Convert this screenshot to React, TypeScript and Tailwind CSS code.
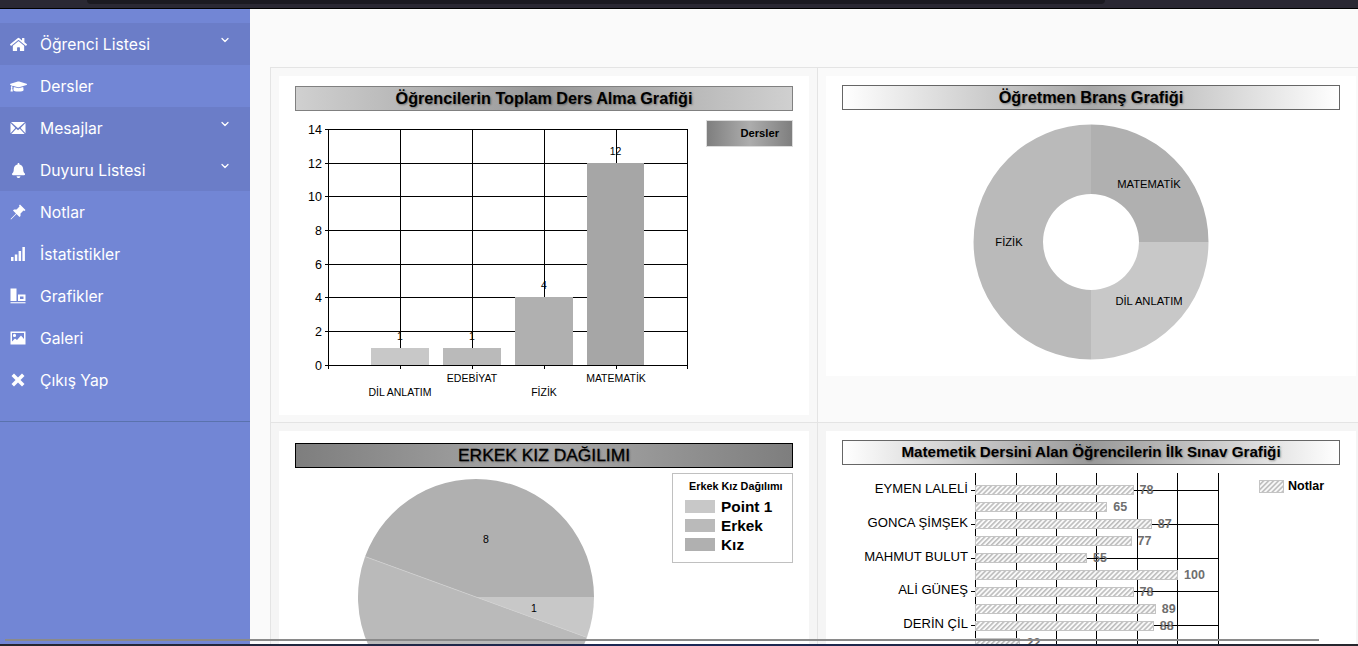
import { Fragment, type ReactNode } from "react";
import { ChevronDown } from "lucide-react";
import { FaBell, FaGraduationCap, FaHome } from "react-icons/fa";

// Sidebar glyphs that the icon packs don't carry in this shape
function EnvelopeIcon() {
  return (
    <svg width="16" height="16" viewBox="0 0 16 16" fill="currentColor">
      <path d="M1 2h14L8 8.200Z" />
      <path d="M0.500 3v10.200L5.400 8Z" />
      <path d="M15.500 3v10.200L10.600 8Z" />
      <path d="M1.300 14 6.200 8.800 8 10.300l1.800-1.500L14.700 14Z" />
    </svg>
  );
}

function PinIcon() {
  return (
    <svg width="16" height="16" viewBox="0 0 16 16" fill="currentColor">
      <path d="M10 0.500 15.500 6l-1 1-1-.5-3 3V12l-1 1-3-3L1 15.500 0.500 15 6 9.500l-3-3 1-1h2.500l3-3-.5-1Z" />
    </svg>
  );
}

function SignalIcon() {
  return (
    <svg width="16" height="16" viewBox="0 0 16 16" fill="currentColor">
      <rect x="1" y="11" width="2.500" height="4" />
      <rect x="4.800" y="8.500" width="2.500" height="6.500" />
      <rect x="8.600" y="5" width="2.500" height="10" />
      <rect x="12.400" y="1" width="2.500" height="14" />
    </svg>
  );
}

function AlignBottomIcon() {
  return (
    <svg width="16" height="16" viewBox="0 0 16 16" fill="currentColor">
      <rect x="0.500" y="0.500" width="6" height="12.500" />
      <path fillRule="evenodd" d="M8 6.500h7.500V13H8Zm2 2v2.500h3.500V8.500Z" />
      <rect x="0.500" y="14.200" width="15" height="1.100" />
    </svg>
  );
}

function PictureIcon() {
  return (
    <svg width="16" height="16" viewBox="0 0 16 16" fill="currentColor">
      <path
        fillRule="evenodd"
        d="M0.500 1.500h15v13h-15Zm1.500 1.500v8.500l3-3 2 1.500 4-4.500 3 3.500V3ZM4.500 3.800a1.600 1.600 0 1 1 0 3.200 1.600 1.600 0 0 1 0-3.200Z"
      />
    </svg>
  );
}

function RemoveIcon() {
  return (
    <svg width="16" height="16" viewBox="0 0 16 16" fill="currentColor">
      <path d="M4 1.500 8 5.500l4-4 2.500 2.500-4 4 4 4-2.500 2.500-4-4-4 4L1.500 12l4-4-4-4Z" />
    </svg>
  );
}

const menu: { label: string; icon: ReactNode; dark?: boolean; arrow?: boolean }[] = [
  { label: "Öğrenci Listesi", icon: <FaHome size={17} />, dark: true, arrow: true },
  { label: "Dersler", icon: <FaGraduationCap size={17} /> },
  { label: "Mesajlar", icon: <EnvelopeIcon />, dark: true, arrow: true },
  { label: "Duyuru Listesi", icon: <FaBell size={15} />, dark: true, arrow: true },
  { label: "Notlar", icon: <PinIcon /> },
  { label: "İstatistikler", icon: <SignalIcon /> },
  { label: "Grafikler", icon: <AlignBottomIcon /> },
  { label: "Galeri", icon: <PictureIcon /> },
  { label: "Çıkış Yap", icon: <RemoveIcon /> },
];

function Sidebar() {
  return (
    <aside className="w-[250px] shrink-0 bg-[#7286d5] pt-[14px] text-white font-['Inter',sans-serif]">
      <ul className="border-b border-[#5a72ad] pb-5">
        {menu.map((item) => (
          <li
            key={item.label}
            className={`flex h-[42px] items-center ${item.dark ? "bg-[#6b7dc8]" : ""}`}
          >
            <span className="flex w-[40px] justify-center pr-[4px]">{item.icon}</span>
            <span className="flex-1 pt-[2px] text-[15.7px] leading-none">{item.label}</span>
            {item.arrow && <ChevronDown className="mr-[19px] mb-[8px] h-3 w-3" strokeWidth={2.5} />}
          </li>
        ))}
      </ul>
    </aside>
  );
}

function ChartTitle({ children, className }: { children: ReactNode; className: string }) {
  return (
    <div
      className={`mx-4 flex h-[25px] items-center justify-center border bg-linear-to-r font-bold text-black [text-shadow:1px_1px_2px_rgba(0,0,0,0.35)] ${className}`}
    >
      {children}
    </div>
  );
}

const GRID = "#000";

function BarChart() {
  const yPos: Record<number, number> = { 14: 129, 12: 163, 10: 196, 8: 230, 6: 264, 4: 297, 2: 331, 1: 348, 0: 365 };
  const ys = [14, 12, 10, 8, 6, 4, 2, 0];
  const xs = [328, 400, 472, 544, 616, 687];
  const bars = [
    { x: 371, w: 58, v: 1, fill: "#c8c8c8" },
    { x: 443, w: 58, v: 1, fill: "#bababa" },
    { x: 515, w: 58, v: 4, fill: "#b0b0b0" },
    { x: 587, w: 57, v: 12, fill: "#a6a6a6" },
  ];
  const cats = [
    { t: "DİL ANLATIM", x: 400, y: 396 },
    { t: "EDEBİYAT", x: 472, y: 382 },
    { t: "FİZİK", x: 544, y: 396 },
    { t: "MATEMATİK", x: 616, y: 382 },
  ];
  return (
    <svg width="530" height="304" viewBox="279 111 530 304" className="block">
      <defs>
        <linearGradient id="legendBg" x1="0" x2="1" y1="0" y2="0">
          <stop offset="0" stopColor="#7e7e7e" />
          <stop offset="0.5" stopColor="#adadad" />
          <stop offset="1" stopColor="#7e7e7e" />
        </linearGradient>
      </defs>
      {ys.map((v) => (
        <Fragment key={v}>
          <line x1="325" x2="688" y1={yPos[v] + 0.5} y2={yPos[v] + 0.5} stroke={GRID} />
          <text x="322" y={yPos[v] + 4.5} textAnchor="end" fontSize="12.500">
            {v}
          </text>
        </Fragment>
      ))}
      {xs.map((x) => (
        <line key={x} x1={x + 0.5} x2={x + 0.5} y1="129" y2="369" stroke={GRID} />
      ))}
      {bars.map((b) => (
        <Fragment key={b.x}>
          <rect x={b.x} y={yPos[b.v]} width={b.w} height={365 - yPos[b.v]} fill={b.fill} />
          <text x={b.x + b.w / 2} y={yPos[b.v] - 8} textAnchor="middle" fontSize="10.500">
            {b.v}
          </text>
        </Fragment>
      ))}
      <line x1="325" x2="688" y1="365.500" y2="365.500" stroke={GRID} />
      {cats.map((c) => (
        <text key={c.t} x={c.x} y={c.y} textAnchor="middle" fontSize="10.500">
          {c.t}
        </text>
      ))}
      <rect x="706.500" y="120.500" width="86" height="26" fill="url(#legendBg)" stroke="#dcdcdc" />
      <text x="779" y="137" textAnchor="end" fontSize="11.200" fontWeight="700">
        Dersler
      </text>
    </svg>
  );
}

function DonutChart() {
  return (
    <svg width="530" height="266" viewBox="826 110 530 266" className="block">
      <path d="M1091 124.500A117.500 117.500 0 0 1 1208.500 242H1139A48 48 0 0 0 1091 194Z" fill="#b0b0b0" />
      <path d="M1208.500 242A117.500 117.500 0 0 1 1091 359.500V290A48 48 0 0 0 1139 242Z" fill="#c8c8c8" />
      <path d="M1091 359.500A117.500 117.500 0 0 1 1091 124.500V194A48 48 0 0 0 1091 290Z" fill="#bababa" />
      <g fontSize="11.200" textAnchor="middle">
        <text x="1149" y="188">MATEMATİK</text>
        <text x="1149" y="305">DİL ANLATIM</text>
        <text x="1009" y="246">FİZİK</text>
      </g>
    </svg>
  );
}

function PieChart() {
  return (
    <svg width="530" height="190" viewBox="279 468 530 190" className="block">
      <path d="M476 597H594A118 118 0 0 0 365.100 556.600Z" fill="#b0b0b0" />
      <path d="M476 597L365.100 556.600A118 118 0 0 0 586.900 637.400Z" fill="#bababa" />
      <path d="M476 597L586.900 637.400A118 118 0 0 0 594 597Z" fill="#c8c8c8" />
      <line x1="365.100" y1="556.600" x2="586.900" y2="637.400" stroke="#d0d0d0" strokeWidth="0.700" />
      <g fontSize="10.500" textAnchor="middle">
        <text x="486" y="543">8</text>
        <text x="534" y="612">1</text>
      </g>
      <rect x="672.500" y="473.500" width="120" height="89" fill="#fff" stroke="#c0c0c0" />
      <text x="689" y="490" fontSize="10.800" fontWeight="700">
        Erkek Kız Dağılımı
      </text>
      {[
        { t: "Point 1", y: 500, fill: "#c8c8c8" },
        { t: "Erkek", y: 519, fill: "#bababa" },
        { t: "Kız", y: 538, fill: "#b0b0b0" },
      ].map((l) => (
        <Fragment key={l.t}>
          <rect x="685" y={l.y} width="30" height="13" fill={l.fill} />
          <text x="721" y={l.y + 12} fontSize="15.400" fontWeight="700">
            {l.t}
          </text>
        </Fragment>
      ))}
    </svg>
  );
}

function HatchBarChart() {
  const xs = [975, 1016, 1056, 1096, 1137, 1177, 1218];
  const cats = [
    { t: "EYMEN LALELİ", y: 489 },
    { t: "GONCA ŞİMŞEK", y: 523 },
    { t: "MAHMUT BULUT", y: 557 },
    { t: "ALİ GÜNEŞ", y: 590 },
    { t: "DERİN ÇİL", y: 624 },
  ];
  const notes = [78, 65, 87, 77, 55, 100, 78, 89, 88, 22];
  return (
    <svg width="530" height="194" viewBox="826 464 530 194" className="block">
      <defs>
        <pattern id="hatch" width="3.500" height="3.500" patternUnits="userSpaceOnUse" patternTransform="rotate(45)">
          <rect width="3.500" height="3.500" fill="#fafafa" />
          <rect width="1.600" height="3.500" fill="#bdbdbd" />
        </pattern>
      </defs>
      {xs.map((x) => (
        <line key={x} x1={x + 0.5} x2={x + 0.5} y1="472" y2="660" stroke={GRID} />
      ))}
      {cats.map((c) => (
        <Fragment key={c.t}>
          <line x1="971" x2="1218" y1={c.y + 0.5} y2={c.y + 0.5} stroke={GRID} />
          <text x="968" y={c.y + 2.5} textAnchor="end" fontSize="13.100">
            {c.t}
          </text>
        </Fragment>
      ))}
      {notes.map((n, i) => {
        const cy = Math.round(489 + i * 16.95);
        return (
          <Fragment key={i}>
            <rect x="975.500" y={cy - 4.5} width={Math.round(n * 2.02)} height="9" fill="url(#hatch)" stroke="#c4c4c4" />
            <text x={975 + n * 2.02 + 7} y={cy + 3.5} fontSize="12.500" fontWeight="700" fill="#6e6e6e">
              {n}
            </text>
          </Fragment>
        );
      })}
      <rect x="1259.500" y="479.500" width="24" height="12" fill="url(#hatch)" stroke="#c4c4c4" />
      <text x="1288" y="488.500" fontSize="12.500" fontWeight="700">
        Notlar
      </text>
    </svg>
  );
}

export default function App() {
  return (
    <div className="relative flex h-[646px] w-[1358px] flex-col overflow-hidden bg-[#fafafa] font-['Liberation_Sans',Arial,sans-serif]">
      <header className="h-[9px] shrink-0 border-b border-black bg-[#2a2833]">
        <div className="ml-[87px] h-[4px] w-[1018px] rounded-b-sm bg-[#1b1a21]" />
      </header>

      <div className="flex min-h-0 flex-1">
        <Sidebar />
        <main className="min-w-0 flex-1 pt-[58px] pl-[20px]">
          <div className="grid w-[1100px] grid-cols-[547px_553px] grid-rows-[355px_auto] border-t border-l border-[#e4e4e4]">
            <section className="border-r border-b border-[#e4e4e4] bg-[#f8f8f8] p-2">
              <div className="h-[339px] w-[530px] bg-white pt-[10px]">
                <ChartTitle className="border-[#808080] from-[#d0d0d0] via-[#989898] to-[#d0d0d0] text-[16.2px]">
                  Öğrencilerin Toplam Ders Alma Grafiği
                </ChartTitle>
                <BarChart />
              </div>
            </section>
            <section className="border-b border-[#e4e4e4] bg-[#fafafa] p-2">
              <div className="h-[300px] w-[530px] bg-white pt-[9px]">
                <ChartTitle className="border-[#666] from-white via-[#a8a8a8] to-white text-[16.3px]">
                  Öğretmen Branş Grafiği
                </ChartTitle>
                <DonutChart />
              </div>
            </section>
            <section className="border-r border-[#e4e4e4] bg-[#f5f5f5] p-2">
              <div className="w-[530px] bg-white pt-[12px]">
                <ChartTitle className="border-black from-[#7e7e7e] via-[#aaaaaa] to-[#7e7e7e] text-[17.4px] font-normal [-webkit-text-stroke:0.3px_black]">
                  ERKEK KIZ DAĞILIMI
                </ChartTitle>
                <PieChart />
              </div>
            </section>
            <section className="bg-[#f5f5f5] p-2">
              <div className="w-[530px] bg-white pt-[9px]">
                <ChartTitle className="h-[24px] border-[#666] from-white via-[#999999] to-white text-[15.2px]">
                  Matemetik Dersini Alan Öğrencilerin İlk Sınav Grafiği
                </ChartTitle>
                <HatchBarChart />
              </div>
            </section>
          </div>
        </main>
      </div>

      <footer className="h-[2px] shrink-0 bg-linear-to-r from-[#26262c] via-[#1c2858] to-[#26262c]" />
      {/* horizontal scrollbar lying over the page */}
      <div className="absolute top-[639px] left-[5px] h-[2px] w-[1314px] bg-[#8a8a8a]" />
    </div>
  );
}
